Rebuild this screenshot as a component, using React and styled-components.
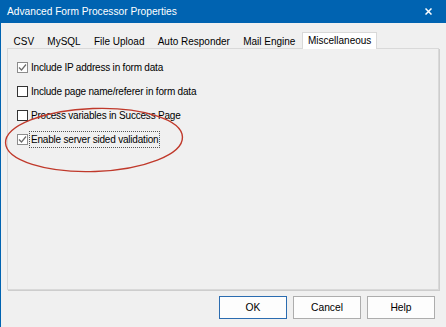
import React from "react";
import styled, { createGlobalStyle } from "styled-components";

const Global = createGlobalStyle`
  html, body { margin: 0; padding: 0; background: #f0f0f0; }
  body { font-family: "Liberation Sans", Arial, sans-serif; }
`;

const Window = styled.div`
  position: relative;
  width: 446px;
  height: 327px;
  box-sizing: border-box;
  border-left: 1px solid #0063b1;
  background: #f0f0f0;
  display: flex;
  flex-direction: column;
  overflow: hidden;
`;

const TitleBar = styled.div`
  height: 23px;
  margin-left: -1px;
  background: #0063b1;
  color: #fff;
  display: flex;
  align-items: center;
  justify-content: space-between;
  padding: 0 14px 0 7px;
  font-size: 10.2px;
`;

const Title = styled.span``;

const CloseIcon = styled.svg`
  display: block;
  margin-top: -1px;
`;

const Body = styled.div`
  flex: 1;
  display: flex;
  flex-direction: column;
  padding: 9px 5px 0 6px;
`;

const TabStrip = styled.div`
  display: flex;
  align-items: flex-end;
  height: 16px;
  position: relative;
  z-index: 1;
`;

const Tab = styled.div`
  font-size: 10px;
  color: #000;
  height: ${(p) => (p.$active ? "17px" : "15px")};
  line-height: 15px;
  padding: 0 ${(p) => (p.$active ? "5px" : "5.6px")};
  box-sizing: border-box;
  background: ${(p) => (p.$active ? "#fff" : "transparent")};
  border: 1px solid ${(p) => (p.$active ? "#d9d9d9" : "transparent")};
  border-bottom: none;
  margin-bottom: ${(p) => (p.$active ? "-1px" : "0")};
  white-space: nowrap;
`;

const Panel = styled.div`
  position: relative;
  width: 432px;
  height: 242px;
  box-sizing: border-box;
  border: 1px solid #d9d9d9;
  box-shadow: 1px 1px 0 #cdcdcd;
  padding: 6px 0 0 9px;
  display: flex;
  flex-direction: column;
`;

const Row = styled.label`
  display: flex;
  align-items: center;
  height: 24px;
  font-size: 10px;
  color: #000;
`;

const Box = styled.span`
  width: 11px;
  height: 11px;
  box-sizing: border-box;
  border: 1px solid ${(p) => (p.$checked ? "#8c8c8c" : "#333")};
  background: #fff;
  display: flex;
  align-items: center;
  justify-content: center;
  margin-right: 1px;
  flex: none;
`;

const Label = styled.span`
  padding: 1px 1px;
  border: 1px dotted ${(p) => (p.$focus ? "#555" : "transparent")};
  line-height: 13px;
  letter-spacing: -0.2px;
`;

const Ellipse = styled.svg`
  position: absolute;
  left: -4px;
  top: 58px;
  overflow: visible;
`;

const Footer = styled.div`
  display: flex;
  justify-content: flex-end;
  gap: 6px;
  padding: 6px 6px 0 0;
`;

const Button = styled.button`
  width: 68px;
  height: 23px;
  box-sizing: border-box;
  background: #fdfdfd;
  border: 1px solid ${(p) => (p.$default ? "#2b6cb0" : "#adadad")};
  font-family: "Liberation Sans", Arial, sans-serif;
  font-size: 10.3px;
  color: #000;
  padding: 0;
`;

const Check = () => (
  <svg width="9" height="9" viewBox="0 0 9 9">
    <path d="M1 4.5 L3.5 7 L8 1.5" fill="none" stroke="#6b6b6b" strokeWidth="1.2" />
  </svg>
);

const items = [
  { text: "Include IP address in form data", checked: true },
  { text: "Include page name/referer in form data", checked: false },
  { text: "Process variables in Success Page", checked: false },
  { text: "Enable server sided validation", checked: true, focus: true },
];

const tabs = ["CSV", "MySQL", "File Upload", "Auto Responder", "Mail Engine", "Miscellaneous"];

export default function App() {
  return (
    <>
      <Global />
      <Window>
        <TitleBar>
          <Title>Advanced Form Processor Properties</Title>
          <CloseIcon width="7" height="7" viewBox="0 0 7 7">
            <path d="M0.5 0.5 L6.5 6.5 M6.5 0.5 L0.5 6.5" stroke="#fff" strokeWidth="1.5" />
          </CloseIcon>
        </TitleBar>
        <Body>
          <TabStrip>
            {tabs.map((t) => (
              <Tab key={t} $active={t === "Miscellaneous"}>
                {t}
              </Tab>
            ))}
          </TabStrip>
          <Panel>
            {items.map((it) => (
              <Row key={it.text}>
                <Box $checked={it.checked}>{it.checked && <Check />}</Box>
                <Label $focus={it.focus}>{it.text}</Label>
              </Row>
            ))}
            <Ellipse width="180" height="66" viewBox="0 0 180 66">
              <ellipse
                cx="90"
                cy="33"
                rx="88.5"
                ry="31.5"
                fill="none"
                stroke="#c0392b"
                strokeWidth="1.4"
                transform="rotate(-2 90 33)"
              />
            </Ellipse>
          </Panel>
          <Footer>
            <Button $default>OK</Button>
            <Button>Cancel</Button>
            <Button>Help</Button>
          </Footer>
        </Body>
      </Window>
    </>
  );
}
